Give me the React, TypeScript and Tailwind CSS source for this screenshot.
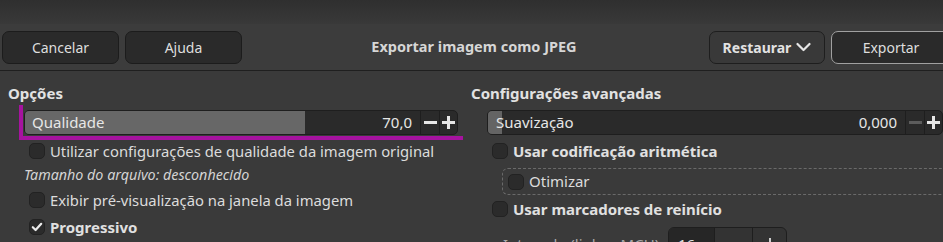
import { ReactNode } from "react"

function Check({ checked }: { checked?: boolean }) {
    return (
        <span className="w-[16px] h-[16px] rounded-[5px] bg-[#2b2b2b] border border-[#222] flex items-center justify-center shrink-0">
            {checked && (
                <svg width="12" height="12" viewBox="0 0 12 12">
                    <path d="M1.8 6.2 L4.6 9 L10.2 2.8" stroke="#ececec" strokeWidth="2.2" fill="none" strokeLinecap="round" strokeLinejoin="round" />
                </svg>
            )}
        </span>
    )
}

function CheckRow({ label, bold, checked, estilo }: { label: string, bold?: boolean, checked?: boolean, estilo: string }) {
    return (
        <div className={"flex items-center gap-[5px] h-[20px] " + estilo}>
            <Check checked={checked} />
            <span className={bold ? "font-bold text-[15px] text-[#e0e0e0]" : "text-[14.8px] text-[#dcdcdc]"}>{label}</span>
        </div>
    )
}

function Btn({ children, estilo }: { children: ReactNode, estilo: string }) {
    return (
        <button className={"h-[33px] rounded-[7px] flex items-center justify-center text-[14px] text-[#dedede] shrink-0 " + estilo}>
            {children}
        </button>
    )
}

function PlusMinus({ minusOff }: { minusOff?: boolean }) {
    return (
        <>
            <div className="w-[19px] h-full border-l border-[#1e1e1e] flex items-center justify-center">
                <span className={"block w-[13px] h-[3px] " + (minusOff ? "bg-[#5c5c5c]" : "bg-[#e6e6e6]")} />
            </div>
            <div className="w-[18px] h-full border-l border-[#1e1e1e] flex items-center justify-center relative">
                <span className="block w-[13px] h-[3px] bg-[#e6e6e6]" />
                <span className="absolute w-[3px] h-[13px] bg-[#e6e6e6]" />
            </div>
        </>
    )
}

export default function App() {
    return (
        <div className="w-[943px] h-[242px] overflow-hidden bg-[#3a3a3a] text-[#dcdcdc]" style={{ fontFamily: '"Noto Sans", "Open Sans", sans-serif' }}>
            <div className="h-[24px] bg-gradient-to-b from-[#2f2f2f] to-[#393939]" />

            {/* header bar */}
            <div className="h-[47px] bg-[#3c3c3c] border-b border-[#1f1f1f] flex items-center pl-[2px]">
                <Btn estilo="w-[117px] bg-[#2a2a2a] border border-[#1c1c1c]">Cancelar</Btn>
                <Btn estilo="w-[117px] ml-[6px] bg-[#2a2a2a] border border-[#1c1c1c]">Ajuda</Btn>
                <div className="flex-1 text-center font-bold text-[14.5px] text-[#d6d6d6] pr-[3px]">Exportar imagem como JPEG</div>
                <Btn estilo="w-[116px] bg-[#393939] border border-[#1e1e1e] gap-[5px] font-bold text-[#e2e2e2]">
                    Restaurar
                    <svg width="15" height="10" viewBox="0 0 15 10">
                        <path d="M1.5 2 L7.5 8 L13.5 2" stroke="#e6e6e6" strokeWidth="2.2" fill="none" strokeLinecap="round" strokeLinejoin="round" />
                    </svg>
                </Btn>
                <Btn estilo="w-[120px] ml-[6px] -mr-[8px] bg-[#2a2a2a] border border-[#a0a0a0]">Exportar</Btn>
            </div>

            <div className="flex">
                {/* left column */}
                <div className="w-[471px] flex flex-col">
                    <div className="mt-[12px] ml-[8px] h-[20px] leading-[20px] font-bold text-[15px] text-[#e2e2e2]">Opções</div>
                    <div className="relative mt-[7px] ml-[24px] w-[434px] h-[25px]">
                        <div className="flex h-full rounded-[5px] border border-[#1e1e1e] bg-[#2a2a2a] overflow-hidden text-[15px]">
                            <div className="flex-1 relative flex items-center">
                                <div className="absolute left-0 top-0 bottom-0 w-[280px] bg-[#676767]" />
                                <span className="relative ml-[7px] text-[#e6e6e6]">Qualidade</span>
                                <span className="relative ml-auto mr-[8px] text-[#e6e6e6]">70,0</span>
                            </div>
                            <PlusMinus />
                        </div>
                        <div className="absolute -left-[5px] -top-[5px] w-[4px] h-[35px] bg-[#a6139f]" />
                        <div className="absolute -left-[5px] top-[26px] w-[444px] h-[4px] bg-[#a6139f]" />
                    </div>
                    <CheckRow estilo="mt-[6px] ml-[29px]" label="Utilizar configurações de qualidade da imagem original" />
                    <div className="mt-[4px] ml-[24px] h-[20px] leading-[20px] italic text-[14.3px] text-[#d4d4d4]">Tamanho do arquivo: desconhecido</div>
                    <CheckRow estilo="mt-[5px] ml-[29px]" label="Exibir pré-visualização na janela da imagem" />
                    <CheckRow estilo="mt-[7px] ml-[29px]" label="Progressivo" bold checked />
                </div>

                {/* right column */}
                <div className="flex-1 flex flex-col">
                    <div className="mt-[12px] h-[20px] leading-[20px] font-bold text-[15px] text-[#e2e2e2]">Configurações avançadas</div>
                    <div className="mt-[7px] ml-[16px] w-[456px] h-[25px] flex rounded-[5px] border border-[#1e1e1e] bg-[#2a2a2a] overflow-hidden text-[15px]">
                        <div className="flex-1 relative flex items-center">
                            <div className="absolute left-0 top-0 bottom-0 w-[14px] bg-[#646464]" />
                            <span className="relative ml-[8px] text-[#e6e6e6]">Suavização</span>
                            <span className="relative ml-auto mr-[8px] text-[#e6e6e6]">0,000</span>
                        </div>
                        <PlusMinus minusOff />
                    </div>
                    <CheckRow estilo="mt-[6px] ml-[21px]" label="Usar codificação aritmética" bold />
                    <div className="mt-[7px] ml-[31px] h-[27px] rounded-[6px] border border-dashed border-[#6a6a6a] flex items-center pl-[5px] gap-[5px] -mr-[4px]">
                        <Check />
                        <span className="text-[15px] text-[#dcdcdc]">Otimizar</span>
                    </div>
                    <CheckRow estilo="mt-[4px] ml-[21px]" label="Usar marcadores de reinício" bold />
                    <div className="mt-[8px] flex items-center">
                        <span className="ml-[32px] w-[165px] text-[15px] text-[#a8a8a8]">Intervalo (linhas MCU):</span>
                        <div className="w-[119px] h-[34px] flex rounded-[6px] border border-[#1e1e1e] bg-[#333] overflow-hidden text-[15px]">
                            <div className="w-[45px] bg-[#262626] pl-[9px] text-[#e0e0e0] leading-[32px]">16</div>
                            <div className="w-[38px] border-l border-[#1e1e1e] flex items-center justify-center">
                                <span className="block w-[13px] h-[2px] bg-[#cfcfcf]" />
                            </div>
                            <div className="flex-1 border-l border-[#1e1e1e] flex items-center justify-center relative">
                                <span className="block w-[13px] h-[2px] bg-[#cfcfcf]" />
                                <span className="absolute w-[2px] h-[13px] bg-[#cfcfcf]" />
                            </div>
                        </div>
                    </div>
                </div>
            </div>
        </div>
    )
}
